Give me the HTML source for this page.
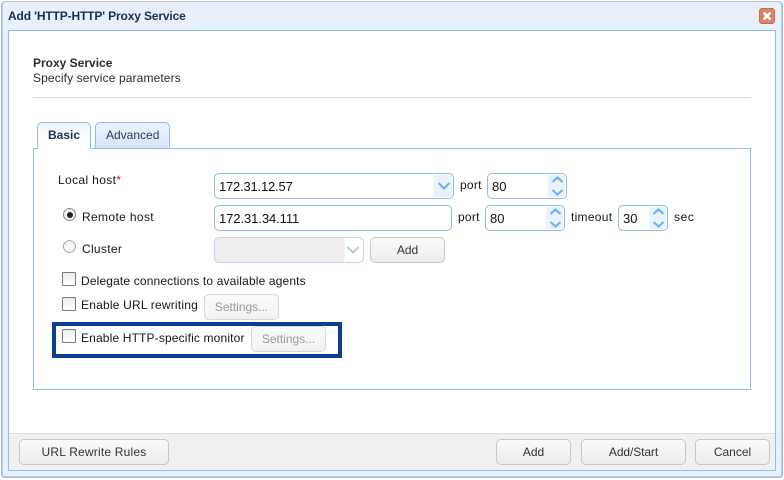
<!DOCTYPE html>
<html>
<head>
<meta charset="utf-8">
<style>
html,body{margin:0;padding:0;background:#fff}
#p{position:relative;width:784px;height:480px;overflow:hidden;background:#fff;font-family:"Liberation Sans",Arial,sans-serif;font-size:12px;color:#15151f}
#p div,#p span.a,#p svg{position:absolute;box-sizing:border-box}
.t{white-space:nowrap;line-height:14px;height:14px}
.in{background:#fff;border:1px solid #8fbaf0;border-radius:5px;height:26px;font-size:13px;color:#111;line-height:26px;padding-left:4px}
.spin{background:#e8f1fc;top:1px;bottom:1px;right:1px;width:17px;border-radius:0 4px 4px 0}
.btn{border:1px solid #c6c6c6;border-radius:5px;background:linear-gradient(#fafafa,#ececec);text-align:center;color:#333;font-size:12px}
.btn.d{color:#9a9a9a;background:linear-gradient(#fbfbfb,#f2f2f2);border-color:#d6d6d6}
.cb{width:13px;height:13px;border:1px solid #7b7b7b;background:linear-gradient(#ececec,#fff);border-radius:1px}
</style>
</head>
<body>
<div id="p">
<!-- window -->
<div style="left:0;top:0;width:784px;height:480px;background:#fff"></div>
<div style="left:1px;top:1px;width:782px;height:477px;background:#e7f0fc;border:1px solid #a9b9cc;border-top-color:#bcc2ca;border-radius:4px;box-shadow:inset 1px 0 0 #b4cff2,inset -1px 0 0 #b4cff2,inset 0 -1px 0 #b4cff2"></div>
<div class="t" style="left:8px;top:9px;font-size:12px;font-weight:bold;color:#1d2d50;line-height:14px;letter-spacing:-.14px">Add 'HTTP-HTTP' Proxy Service</div>
<!-- close -->
<div style="left:759px;top:8px;width:16px;height:16px;background:#d9835f;border:1px solid #b87355;border-radius:3px"></div>
<svg style="left:759px;top:8px" width="16" height="16" viewBox="0 0 16 16"><path d="M4.5 4.5L11.5 11.5M11.5 4.5L4.5 11.5" stroke="#fff" stroke-width="2.6" fill="none"/></svg>
<!-- content -->
<div style="left:8px;top:30px;width:768px;height:441px;background:#fff;border:1px solid #92bbf0"></div>
<div class="t" style="left:33px;top:56px;font-weight:bold;color:#2a2a35">Proxy Service</div>
<div class="t" style="left:33px;top:71px;color:#2a2a35;letter-spacing:.12px">Specify service parameters</div>
<div style="left:33px;top:97px;width:718px;height:1px;background:#dedede"></div>
<!-- panel -->
<div style="left:33px;top:148px;width:718px;height:242px;border:1px solid #92bbf0;background:#fff"></div>
<!-- tabs -->
<div style="left:37px;top:122px;width:54px;height:27px;background:linear-gradient(#e9f1fc,#fff 60%);border:1px solid #92bbf0;border-bottom:none;border-radius:5px 5px 0 0"></div>
<div class="t" style="left:48px;top:128px;font-weight:bold;color:#1d2d50">Basic</div>
<div style="left:95px;top:122px;width:75px;height:26px;background:linear-gradient(#eef4fd,#d6e5fa);border:1px solid #92bbf0;border-bottom:none;border-radius:5px 5px 0 0"></div>
<div class="t" style="left:106px;top:128px;color:#2a3a5a">Advanced</div>
<!-- row 1 -->
<div class="t" style="left:58px;top:173px;letter-spacing:.36px">Local host<span style="color:#d11">*</span></div>
<div class="in" style="left:214px;top:173px;width:240px;letter-spacing:-.2px">172.31.12.57<div class="spin" style="width:18px"></div></div>
<svg style="left:436px;top:180px" width="16" height="12"><path d="M2.5 3L8 8.5L13.5 3" stroke="#6fb0ea" stroke-width="2" fill="none"/></svg>
<div class="t" style="left:460px;top:178px;letter-spacing:.25px">port</div>
<div class="in" style="left:487px;top:173px;width:80px">80<div class="spin"></div></div>
<svg style="left:549px;top:174px" width="17" height="24"><path d="M3.5 8L8.5 3.5L13.5 8M3.5 16L8.5 20.5L13.5 16" stroke="#6fb0ea" stroke-width="2" fill="none"/></svg>
<!-- row 2 -->
<div style="left:63px;top:208px;width:13px;height:13px;border:1px solid #8a8a8a;border-radius:50%;background:#f4f4f4"></div>
<div style="left:66.500px;top:211.500px;width:6px;height:6px;border-radius:50%;background:#222"></div>
<div class="t" style="left:82px;top:210px;letter-spacing:.36px">Remote host</div>
<div class="in" style="left:214px;top:205px;width:238px;letter-spacing:-.08px">172.31.34.111</div>
<div class="t" style="left:458px;top:210px;letter-spacing:.25px">port</div>
<div class="in" style="left:485px;top:205px;width:80px">80<div class="spin"></div></div>
<svg style="left:547px;top:206px" width="17" height="24"><path d="M3.5 8L8.5 3.5L13.5 8M3.5 16L8.5 20.5L13.5 16" stroke="#6fb0ea" stroke-width="2" fill="none"/></svg>
<div class="t" style="left:571px;top:210px;letter-spacing:.28px">timeout</div>
<div class="in" style="left:618px;top:205px;width:50px">30<div class="spin"></div></div>
<svg style="left:650px;top:206px" width="17" height="24"><path d="M3.5 8L8.5 3.5L13.5 8M3.5 16L8.5 20.5L13.5 16" stroke="#6fb0ea" stroke-width="2" fill="none"/></svg>
<div class="t" style="left:674px;top:210px;letter-spacing:.6px">sec</div>
<!-- row 3 -->
<div style="left:63px;top:240px;width:13px;height:13px;border:1px solid #ababab;border-radius:50%;background:#f6f6f6"></div>
<div class="t" style="left:82px;top:242px;letter-spacing:.3px">Cluster</div>
<div style="left:214px;top:237px;width:150px;height:26px;background:#fff;border:1px solid #b9d4f4;border-radius:5px"></div>
<div style="left:215px;top:238px;width:130px;height:24px;background:#eeeeee;border-radius:4px"></div>
<svg style="left:345px;top:244px" width="16" height="12"><path d="M2.500 3L8 8.500L13.500 3" stroke="#a9cdf2" stroke-width="2" fill="none"/></svg>
<div class="btn" style="left:370px;top:237px;width:75px;height:26px;line-height:24px">Add</div>
<!-- checks -->
<div class="cb" style="left:62px;top:272px;width:14px;height:14px"></div>
<div class="t" style="left:81px;top:274px;letter-spacing:.15px">Delegate connections to available agents</div>
<div class="cb" style="left:62px;top:297px;width:14px;height:14px"></div>
<div class="t" style="left:81px;top:298px;letter-spacing:.2px">Enable URL rewriting</div>
<div class="btn d" style="left:204px;top:294px;width:75px;height:26px;line-height:24px">Settings...</div>
<div class="cb" style="left:62px;top:329px;width:14px;height:14px"></div>
<div class="t" style="left:81px;top:331px;letter-spacing:.15px">Enable HTTP-specific monitor</div>
<div class="btn d" style="left:251px;top:326px;width:75px;height:26px;line-height:24px">Settings...</div>
<!-- highlight -->
<div style="left:52px;top:322px;width:290px;height:36px;border:4px solid #0b3f8f"></div>
<!-- footer -->
<div style="left:9px;top:433px;width:766px;height:37px;background:#f0f0f0;border-top:1px solid #dcdcdc"></div>
<div class="btn" style="left:19px;top:439px;width:150px;height:26px;line-height:24px;letter-spacing:.2px">URL Rewrite Rules</div>
<div class="btn" style="left:496px;top:439px;width:75px;height:26px;line-height:24px">Add</div>
<div class="btn" style="left:581px;top:439px;width:105px;height:26px;line-height:24px;letter-spacing:-.1px">Add/Start</div>
<div class="btn" style="left:695px;top:439px;width:75px;height:26px;line-height:24px">Cancel</div>
</div>
</body>
</html>
